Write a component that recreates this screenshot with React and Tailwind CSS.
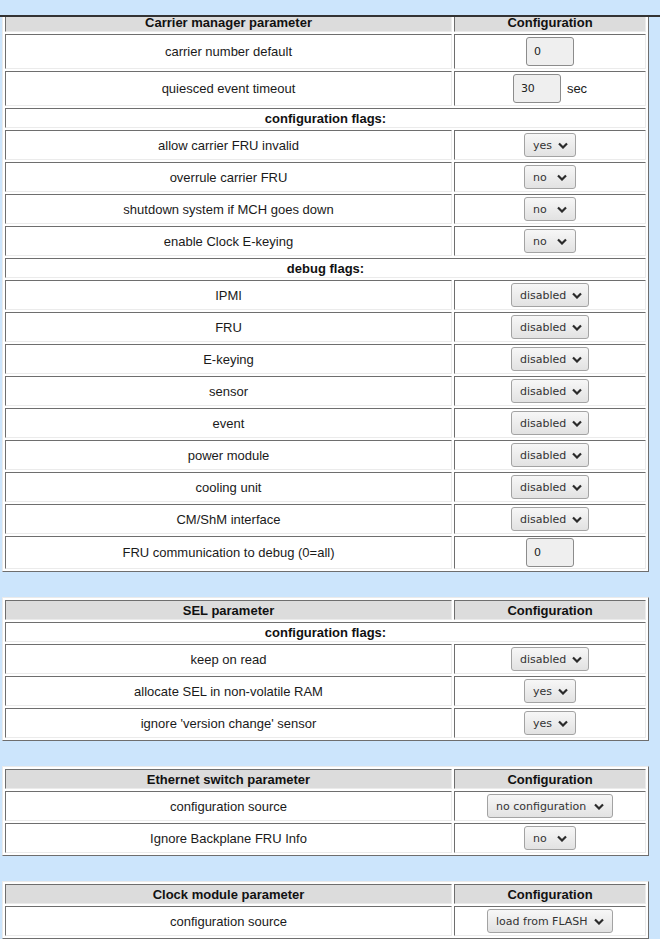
import React from "react";

const tables = [
  {
    title: "Carrier manager parameter",
    first: true,
    rows: [
      { type: "input", label: "carrier number default", value: "0", h: "h-[35px]" },
      { type: "input", label: "quiesced event timeout", value: "30", unit: "sec", h: "h-[35px]" },
      { type: "section", label: "configuration flags:" },
      { type: "select", label: "allow carrier FRU invalid", value: "yes", w: "w-[52px]" },
      { type: "select", label: "overrule carrier FRU", value: "no", w: "w-[52px]" },
      { type: "select", label: "shutdown system if MCH goes down", value: "no", w: "w-[52px]" },
      { type: "select", label: "enable Clock E-keying", value: "no", w: "w-[52px]" },
      { type: "section", label: "debug flags:" },
      { type: "select", label: "IPMI", value: "disabled", w: "w-[78px]" },
      { type: "select", label: "FRU", value: "disabled", w: "w-[78px]" },
      { type: "select", label: "E-keying", value: "disabled", w: "w-[78px]" },
      { type: "select", label: "sensor", value: "disabled", w: "w-[78px]" },
      { type: "select", label: "event", value: "disabled", w: "w-[78px]" },
      { type: "select", label: "power module", value: "disabled", w: "w-[78px]" },
      { type: "select", label: "cooling unit", value: "disabled", w: "w-[78px]" },
      { type: "select", label: "CM/ShM interface", value: "disabled", w: "w-[78px]" },
      { type: "input", label: "FRU communication to debug (0=all)", value: "0", h: "h-[33px]" },
    ],
  },
  {
    title: "SEL parameter",
    rows: [
      { type: "section", label: "configuration flags:" },
      { type: "select", label: "keep on read", value: "disabled", w: "w-[78px]" },
      { type: "select", label: "allocate SEL in non-volatile RAM", value: "yes", w: "w-[52px]" },
      { type: "select", label: "ignore 'version change' sensor", value: "yes", w: "w-[52px]" },
    ],
  },
  {
    title: "Ethernet switch parameter",
    rows: [
      { type: "select", label: "configuration source", value: "no configuration", w: "w-[126px]" },
      { type: "select", label: "Ignore Backplane FRU Info", value: "no", w: "w-[52px]" },
    ],
  },
  {
    title: "Clock module parameter",
    rows: [
      { type: "select", label: "configuration source", value: "load from FLASH", w: "w-[126px]" },
    ],
  },
];

const cellBorder =
  "border border-t-[#6e6e6e] border-l-[#6e6e6e] border-r-[#ebebeb] border-b-[#ebebeb]";

function Chevron() {
  return (
    <svg width="10" height="7" viewBox="0 0 10 7" className="shrink-0">
      <path d="M1 1.5l4 4 4-4" fill="none" stroke="#2b2b2b" strokeWidth="2.2" />
    </svg>
  );
}

function Select({ value, w }) {
  return (
    <div
      className={`${w} h-[24px] flex items-center justify-between gap-[6px] pl-[8px] pr-[8px] rounded-[3px] border border-[#a3a3a3] bg-gradient-to-b from-[#f7f7f7] to-[#e2e2e2] text-[11px] text-[#333] whitespace-nowrap font-['DejaVu_Sans',sans-serif]`}
    >
      <span>{value}</span>
      <Chevron />
    </div>
  );
}

function Input({ value }) {
  return (
    <div className="w-[48px] h-[29px] flex items-center pl-[7px] rounded-[3px] border border-[#8c8c8c] bg-[#efefef] text-[11px] text-[#222] font-['DejaVu_Sans',sans-serif]">
      {value}
    </div>
  );
}

function Row({ row }) {
  if (row.type === "section") {
    return (
      <div
        className={`${cellBorder} h-[20px] bg-white flex items-center justify-center font-bold text-[#111]`}
      >
        {row.label}
      </div>
    );
  }
  const h = row.type === "input" ? row.h : "h-[30px]";
  return (
    <div className={`flex gap-[2px] ${h}`}>
      <div className={`${cellBorder} w-[447px] bg-white flex items-center justify-center text-[#1a1a1a]`}>
        {row.label}
      </div>
      <div className={`${cellBorder} w-[192px] bg-white flex items-center justify-center`}>
        {row.type === "input" ? (
          <div className="flex items-center gap-[6px]">
            <Input value={row.value} />
            {row.unit && <span className="text-[#1a1a1a]">{row.unit}</span>}
          </div>
        ) : (
          <Select value={row.value} w={row.w} />
        )}
      </div>
    </div>
  );
}

function ParamTable({ table }) {
  return (
    <div
      className={`ml-[2px] w-[647px] mb-[25px] p-[2px] bg-white flex flex-col gap-[2px] border border-t-[#ebebeb] border-l-[#ebebeb] border-r-[#6e6e6e] border-b-[#6e6e6e] ${
        table.first ? "-mt-[8px]" : ""
      }`}
    >
      <div className="flex gap-[2px] h-[20px]">
        <div className={`${cellBorder} w-[447px] bg-[#dcdcdc] flex items-center justify-center font-bold text-[#111]`}>
          {table.title}
        </div>
        <div className={`${cellBorder} w-[192px] bg-[#dcdcdc] flex items-center justify-center font-bold text-[#111]`}>
          Configuration
        </div>
      </div>
      {table.rows.map((row, i) => (
        <Row key={i} row={row} />
      ))}
    </div>
  );
}

export default function App() {
  return (
    <div className="h-[939px] overflow-hidden bg-[#cce5fc] text-[13px] leading-none font-['Liberation_Sans',Arial,sans-serif]">
      {/* top frame edge */}
      <div className="h-[17px] border-b-2 border-[#333]" />
      <div className="h-[922px] overflow-hidden">
        {tables.map((t, i) => (
          <ParamTable key={i} table={t} />
        ))}
      </div>
    </div>
  );
}
